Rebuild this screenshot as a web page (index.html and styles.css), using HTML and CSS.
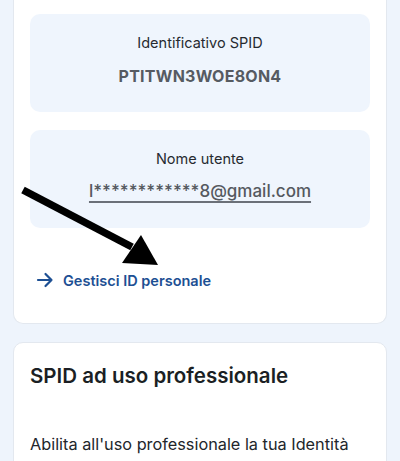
FILE: index.html
```html
<!DOCTYPE html>
<html lang="it">
<head>
<meta charset="utf-8">
<link rel="stylesheet" href="styles.css">
</head>
<body>
<div class="page">
  <section class="card card-top">
    <div class="info-box">
      <div class="info-label">Identificativo SPID</div>
      <div class="info-value code">PTITWN3WOE8ON4</div>
    </div>
    <div class="info-box">
      <div class="info-label">Nome utente</div>
      <div class="info-value email">l************8@gmail.com</div>
    </div>
    <a class="manage-link" href="#">
      <svg class="link-icon" width="18" height="16" viewBox="0 0 18 16" aria-hidden="true">
        <path d="M2 8 H15.5 M9.5 2 L15.5 8 L9.5 14" fill="none" stroke="#1d4f93" stroke-width="2.2" stroke-linecap="round" stroke-linejoin="round"/>
      </svg>
      <span>Gestisci ID personale</span>
    </a>
  </section>
  <section class="card card-bottom">
    <h2 class="card-title">SPID ad uso professionale</h2>
    <p class="card-text">Abilita all'uso professionale la tua Identità</p>
  </section>
  <svg class="annotation" width="400" height="461" viewBox="0 0 400 461" aria-hidden="true">
    <line x1="23" y1="190" x2="132" y2="247" stroke="#000" stroke-width="7.5" stroke-linecap="butt"/>
    <polygon points="158,265 122,263 141,235" fill="#000"/>
  </svg>
</div>
</body>
</html>
```
FILE: styles.css
```css
* { box-sizing: border-box; }
html, body {
  margin: 0;
  padding: 0;
  background: #eef4fc;
}
body {
  font-family: Inter, "Noto Sans", "Liberation Sans", sans-serif;
  color: #1f2328;
  width: 400px;
  height: 461px;
  overflow: hidden;
}
.page {
  position: relative;
  padding: 0 13px;
  display: flex;
  flex-direction: column;
  gap: 18px;
}
.card {
  background: #ffffff;
  border: 1px solid #e3e8ef;
  border-radius: 10px;
}
.card-top {
  border-top: none;
  border-top-left-radius: 0;
  border-top-right-radius: 0;
  padding: 14px 16px 32px;
  display: flex;
  flex-direction: column;
  gap: 18px;
}
.info-box {
  background: #eff5fd;
  border-radius: 10px;
  display: flex;
  flex-direction: column;
  align-items: center;
  text-align: center;
  height: 98px;
  padding-top: 19px;
  gap: 11px;
}
.info-box + .info-box {
  gap: 10px;
}
.info-label {
  font-size: 14.5px;
  line-height: 20px;
  color: #262a30;
}
.info-value {
  line-height: 24px;
  color: #565b62;
}
.code {
  font-size: 16px;
  font-weight: 700;
  letter-spacing: 0.25px;
}
.email {
  font-size: 17px;
  font-weight: 500;
  color: #55595f;
  text-decoration: underline;
  text-decoration-color: #6b7078;
  text-underline-offset: 4px;
  text-decoration-thickness: 1.5px;
}
.manage-link {
  display: flex;
  align-items: center;
  gap: 9px;
  margin-top: 23px;
  padding-left: 6px;
  height: 22px;
  color: #1d4f93;
  text-decoration: none;
  font-size: 14.5px;
  font-weight: 600;
}
.link-icon { flex: none; }
.card-bottom {
  padding: 18px 16px 20px;
  height: 140px;
}
.card-title {
  margin: 0;
  font-size: 20.5px;
  line-height: 30px;
  font-weight: 600;
  color: #1b1f24;
}
.card-text {
  margin: 41px 0 0;
  font-size: 16.3px;
  line-height: 24px;
  color: #22262b;
}
.annotation {
  position: absolute;
  left: 0;
  top: 0;
  pointer-events: none;
}
```
